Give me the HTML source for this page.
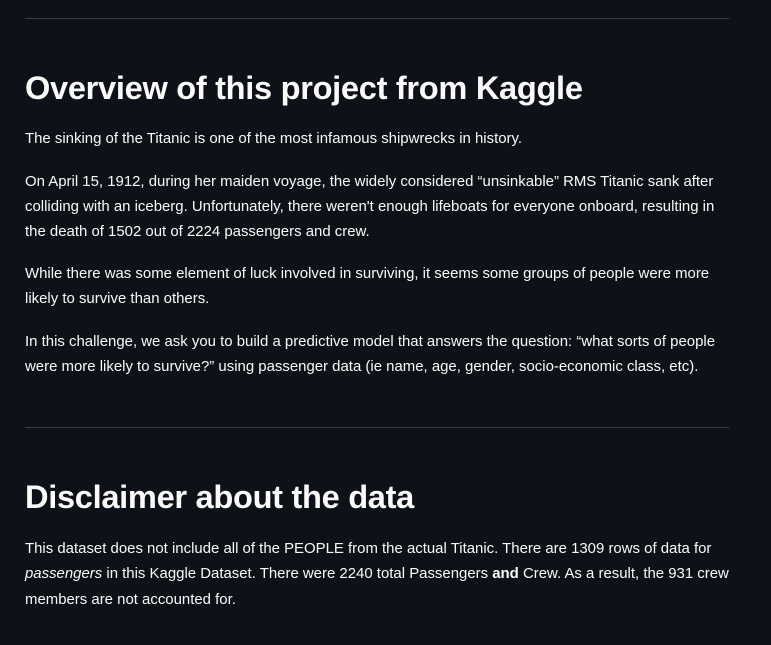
<!DOCTYPE html>
<html><head><meta charset="utf-8"><style>
html,body{margin:0;padding:0;background:#0e1117;width:771px;height:645px;overflow:hidden;}
body{position:relative;font-family:"Liberation Sans",sans-serif;color:#fafafa;}
.hr{position:absolute;left:25px;width:704px;height:1px;background:#3a3d45;}
.l{position:absolute;left:25px;font-size:14.95px;line-height:26px;height:26px;white-space:nowrap;}
.h{position:absolute;left:25px;font-size:32.6px;font-weight:bold;line-height:40px;white-space:nowrap;letter-spacing:-0.3px;}
</style></head><body>
<div class="hr" style="top:18px"></div>
<div class="h" style="top:68px">Overview of this project from Kaggle</div>
<div class="l" style="top:126px">The sinking of the Titanic is one of the most infamous shipwrecks in history.</div>
<div class="l" style="top:169px">On April 15, 1912, during her maiden voyage, the widely considered “unsinkable” RMS Titanic sank after</div>
<div class="l" style="top:194px">colliding with an iceberg. Unfortunately, there weren't enough lifeboats for everyone onboard, resulting in</div>
<div class="l" style="top:219px">the death of 1502 out of 2224 passengers and crew.</div>
<div class="l" style="top:261px">While there was some element of luck involved in surviving, it seems some groups of people were more</div>
<div class="l" style="top:286px">likely to survive than others.</div>
<div class="l" style="top:329px">In this challenge, we ask you to build a predictive model that answers the question: “what sorts of people</div>
<div class="l" style="top:354px">were more likely to survive?” using passenger data (ie name, age, gender, socio-economic class, etc).</div>
<div class="hr" style="top:427px"></div>
<div class="h" style="top:477px">Disclaimer about the data</div>
<div class="l" style="top:536px">This dataset does not include all of the PEOPLE from the actual Titanic. There are 1309 rows of data for</div>
<div class="l" style="top:561px"><i>passengers</i> in this Kaggle Dataset. There were 2240 total Passengers <b>and</b> Crew. As a result, the 931 crew</div>
<div class="l" style="top:587px">members are not accounted for.</div>
</body></html>
